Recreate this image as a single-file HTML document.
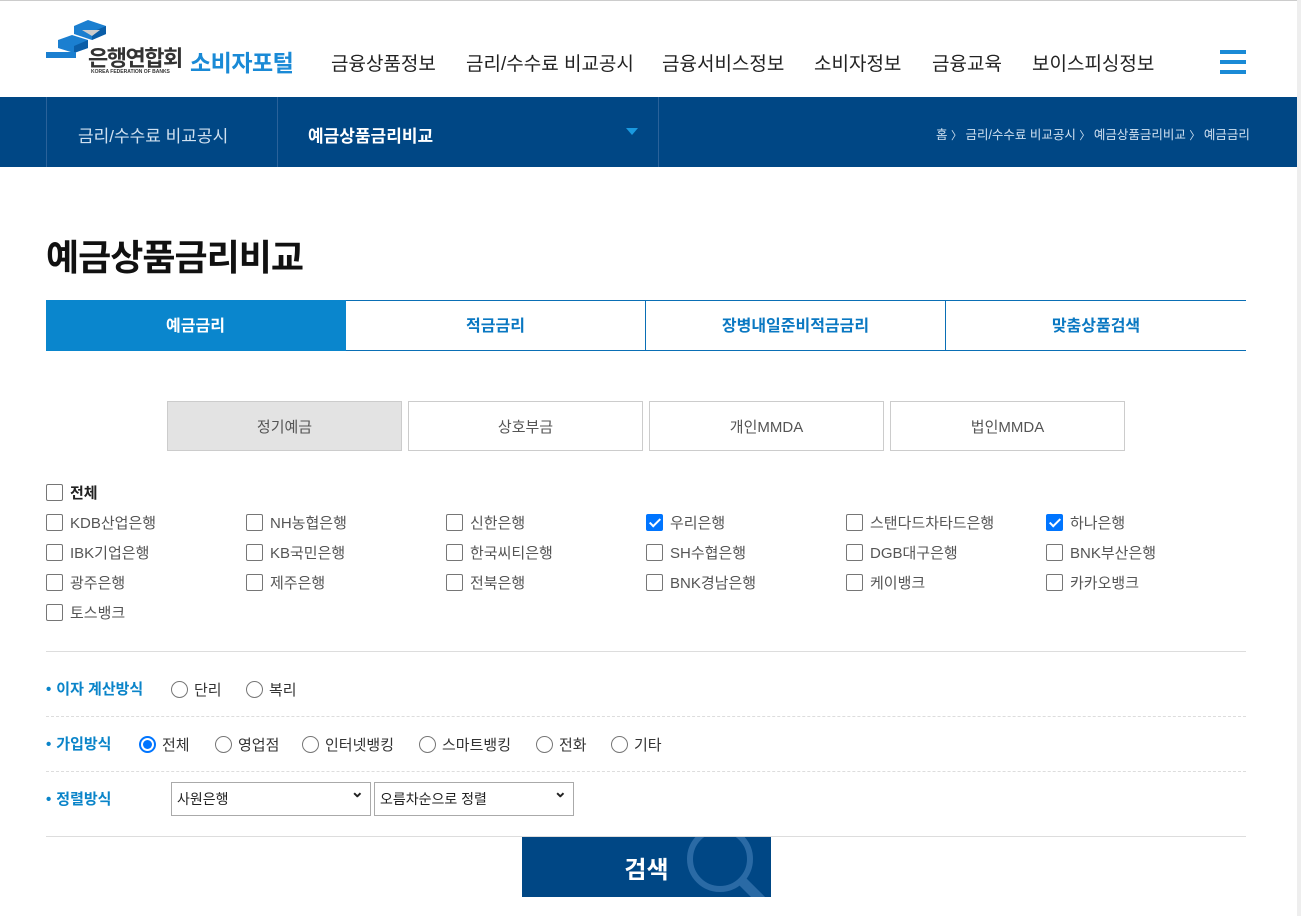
<!DOCTYPE html><html><head><meta charset="utf-8"><style>
*{margin:0;padding:0;box-sizing:border-box}
body{width:1301px;height:916px;overflow:hidden;background:#fff;font-family:"Liberation Sans","Noto Sans CJK KR",sans-serif;position:relative;color:#333}
.a{position:absolute}
.nav span{position:absolute;top:49px;font-size:19px;color:#222;white-space:nowrap}
.cb{position:absolute;font-size:15px;color:#555;white-space:nowrap;display:flex;align-items:center;height:20px}
.cb i{display:inline-block;width:17px;height:17px;border:1px solid #767676;border-radius:2px;margin-right:7px;background:#fff;position:relative}
.cb i.on{background:#0075ff;border-color:#0075ff}
.cb i.on:after{content:"";position:absolute;left:5px;top:1px;width:4px;height:9px;border:solid #fff;border-width:0 2px 2px 0;transform:rotate(45deg)}
.rd{position:absolute;display:inline-flex;align-items:center;font-size:15px;color:#333;white-space:nowrap}
.rd i{display:inline-block;width:17px;height:17px;border:1px solid #767676;border-radius:50%;margin-right:6px;position:relative}
.rd i.on{border:2px solid #0075ff}
.rd i.on:after{content:"";position:absolute;left:2px;top:2px;width:9px;height:9px;border-radius:50%;background:#0075ff}
.lbl{position:absolute;left:46px;font-size:15px;font-weight:bold;color:#0a84c9}
.lbl:before{content:"•";margin-right:5px}
.tab{position:absolute;top:300px;height:51px;width:300px;border-top:1px solid #0a6fb5;border-bottom:1px solid #0a6fb5;border-right:1px solid #0a6fb5;text-align:center;line-height:52px;font-size:16px;font-weight:bold;color:#0a78c2}
.st{position:absolute;top:401px;height:50px;width:235px;border:1px solid #ccc;text-align:center;line-height:52px;font-size:15px;color:#555}
.sel{position:absolute;top:782px;height:34px;border:1px solid #aaa;font-size:14px;color:#222;padding-left:5px;line-height:32px;background:#fff}
.sel:after{content:"⌄";position:absolute;right:6px;top:-6px;font-size:16px;font-weight:bold}
</style></head><body>
<div class="a" style="left:0;top:0;width:1301px;height:1px;background:#ccc"></div>
<div class="a" style="left:1297px;top:0;width:4px;height:916px;background:#eee"></div>
<svg class="a" style="left:44px;top:18px" width="70" height="58" viewBox="0 0 70 58">
<polygon points="30,8 44,2 62,8 62,16 48,22 30,16" fill="#1b7fd0"/><polygon points="48,14 62,8 62,16 48,22" fill="#0b5ea8"/>
<polygon points="38,12 56,12 48,18" fill="#ccc"/>
<polygon points="14,22 28,17 44,22 44,30 30,35 14,30" fill="#1b7fd0"/><polygon points="30,28 44,22 44,30 30,35" fill="#0b5ea8"/>
<rect x="2" y="34" width="30" height="6" fill="#1b7fd0"/>
</svg>
<div class="a" style="left:88px;top:41px;font-size:22px;font-weight:bold;color:#333;letter-spacing:-1.5px">은행연합회</div>
<div class="a" style="left:91px;top:69px;font-size:5px;font-weight:bold;color:#333">KOREA FEDERATION OF BANKS</div>
<div class="a" style="left:190px;top:44px;font-size:23px;font-weight:bold;color:#1a8ad6;letter-spacing:-0.5px">소비자포털</div>
<div class="nav"><span style="left:331px">금융상품정보</span><span style="left:466px">금리/수수료 비교공시</span><span style="left:662px">금융서비스정보</span><span style="left:814px">소비자정보</span><span style="left:932px">금융교육</span><span style="left:1032px">보이스피싱정보</span></div>
<div class="a" style="left:1220px;top:50px;width:26px;height:4px;background:#1a8ad6;box-shadow:0 10px 0 #1a8ad6,0 20px 0 #1a8ad6"></div>
<div class="a" style="left:0;top:97px;width:1297px;height:70px;background:#004785"></div>
<div class="a" style="left:46px;top:97px;width:1px;height:70px;background:#2a629a"></div>
<div class="a" style="left:277px;top:97px;width:1px;height:70px;background:#2a629a"></div>
<div class="a" style="left:658px;top:97px;width:1px;height:70px;background:#2a629a"></div>
<div class="a" style="left:78px;top:122px;font-size:17px;color:#cfe0f0">금리/수수료 비교공시</div>
<div class="a" style="left:308px;top:122px;font-size:17px;font-weight:bold;color:#fff">예금상품금리비교</div>
<div class="a" style="left:626px;top:128px;width:0;height:0;border-left:6px solid transparent;border-right:6px solid transparent;border-top:7px solid #1a9ae0"></div>
<div class="a" style="left:936px;top:124px;font-size:12.5px;color:#cfe0f0;white-space:nowrap">홈 <span style="font-size:11px">〉</span> 금리/수수료 비교공시 <span style="font-size:11px">〉</span> 예금상품금리비교 <span style="font-size:11px">〉</span> 예금금리</div>
<div class="a" style="left:46px;top:229px;font-size:36px;font-weight:bold;color:#111;letter-spacing:-1px">예금상품금리비교</div>
<div class="tab" style="left:46px;background:#0a86cd;color:#fff;border-color:#0a86cd">예금금리</div>
<div class="tab" style="left:346px">적금금리</div>
<div class="tab" style="left:646px">장병내일준비적금금리</div>
<div class="tab" style="left:946px;border-right:none">맞춤상품검색</div>
<div class="st" style="left:167px;background:#e3e3e3">정기예금</div>
<div class="st" style="left:408px">상호부금</div>
<div class="st" style="left:649px">개인MMDA</div>
<div class="st" style="left:890px">법인MMDA</div>
<div class="cb" style="left:46px;top:482px;font-weight:bold;color:#222"><i></i>전체</div>
<div class="cb" style="left:46px;top:512px"><i></i>KDB산업은행</div><div class="cb" style="left:246px;top:512px"><i></i>NH농협은행</div><div class="cb" style="left:446px;top:512px"><i></i>신한은행</div><div class="cb" style="left:646px;top:512px"><i class="on"></i>우리은행</div><div class="cb" style="left:846px;top:512px"><i></i>스탠다드차타드은행</div><div class="cb" style="left:1046px;top:512px"><i class="on"></i>하나은행</div>
<div class="cb" style="left:46px;top:542px"><i></i>IBK기업은행</div><div class="cb" style="left:246px;top:542px"><i></i>KB국민은행</div><div class="cb" style="left:446px;top:542px"><i></i>한국씨티은행</div><div class="cb" style="left:646px;top:542px"><i></i>SH수협은행</div><div class="cb" style="left:846px;top:542px"><i></i>DGB대구은행</div><div class="cb" style="left:1046px;top:542px"><i></i>BNK부산은행</div>
<div class="cb" style="left:46px;top:572px"><i></i>광주은행</div><div class="cb" style="left:246px;top:572px"><i></i>제주은행</div><div class="cb" style="left:446px;top:572px"><i></i>전북은행</div><div class="cb" style="left:646px;top:572px"><i></i>BNK경남은행</div><div class="cb" style="left:846px;top:572px"><i></i>케이뱅크</div><div class="cb" style="left:1046px;top:572px"><i></i>카카오뱅크</div>
<div class="cb" style="left:46px;top:602px"><i></i>토스뱅크</div>
<div class="a" style="left:46px;top:651px;width:1200px;height:1px;background:#ddd"></div>
<div class="lbl" style="top:678px">이자 계산방식</div>
<span class="rd" style="left:171px;top:679px"><i></i>단리</span><span class="rd" style="left:246px;top:679px"><i></i>복리</span>
<div class="a" style="left:46px;top:716px;width:1200px;border-top:1px dashed #ddd"></div>
<div class="lbl" style="top:733px">가입방식</div>
<span class="rd" style="left:139px;top:734px"><i class="on"></i>전체</span><span class="rd" style="left:215px;top:734px"><i></i>영업점</span><span class="rd" style="left:302px;top:734px"><i></i>인터넷뱅킹</span><span class="rd" style="left:419px;top:734px"><i></i>스마트뱅킹</span><span class="rd" style="left:536px;top:734px"><i></i>전화</span><span class="rd" style="left:611px;top:734px"><i></i>기타</span>
<div class="a" style="left:46px;top:771px;width:1200px;border-top:1px dashed #ddd"></div>
<div class="lbl" style="top:788px">정렬방식</div>
<div class="sel" style="left:171px;width:200px">사원은행</div>
<div class="sel" style="left:374px;width:200px">오름차순으로 정렬</div>
<div class="a" style="left:46px;top:836px;width:1200px;height:1px;background:#ddd"></div>
<div class="a" style="left:522px;top:837px;width:249px;height:60px;background:#004785;overflow:hidden">
<svg class="a" style="left:160px;top:0" width="89" height="60"><circle cx="38" cy="22" r="30" fill="none" stroke="#2a6aa5" stroke-width="6"/><path d="M60 44 L82 66" stroke="#2a6aa5" stroke-width="10"/></svg>
<div class="a" style="left:0;top:13px;width:249px;text-align:center;font-size:24px;font-weight:bold;color:#fff">검색</div></div>
</body></html>
